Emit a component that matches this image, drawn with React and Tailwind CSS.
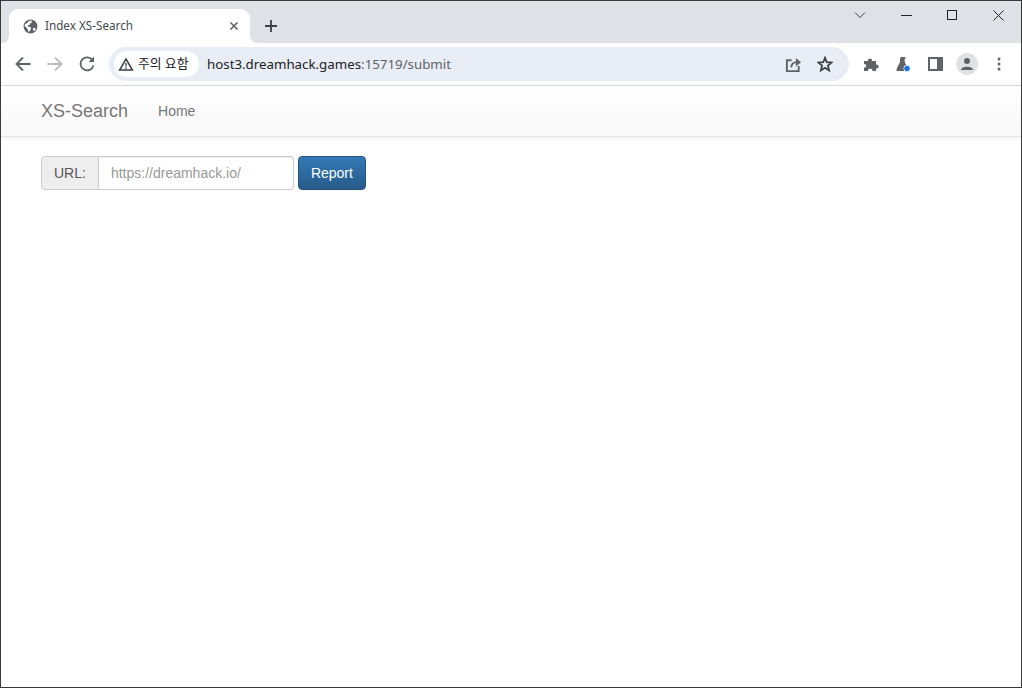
const ui = { fontFamily: '"Noto Sans", "Noto Sans CJK KR", sans-serif' };

function Globe() {
  return (
    <svg width="15" height="15" viewBox="0 0 16 16" className="shrink-0">
      <circle cx="8" cy="8" r="7.4" fill="#5f6368" />
      <path d="M2 5.5 L5 4 L6 2 L9 1.6 L9.5 3.5 L7.5 5 L7 6.5 L5 6.5 L5.5 8 L8 8.5 L8.5 10.5 L7 13 L6 14 L5 11 L3.5 9 L1.8 7.5Z" fill="#fff" />
      <path d="M11 9.5 L13 9.5 L13.5 11 L12 13 L10.5 11.5Z" fill="#fff" />
    </svg>
  );
}

function Tab() {
  return (
    <div className="relative flex items-center w-[241px] h-[34px] ml-[8px] bg-white rounded-t-[9px] pl-[14px] pr-[11px]">
      <svg className="absolute left-[-8px] bottom-0" width="8" height="8" viewBox="0 0 8 8"><path d="M8 0 V8 H0 Q8 8 8 0Z" fill="#fff" /></svg>
      <svg className="absolute right-[-8px] bottom-0" width="8" height="8" viewBox="0 0 8 8"><path d="M0 0 V8 H8 Q0 8 0 0Z" fill="#fff" /></svg>
      <Globe />
      <span className="ml-[7px] text-[11.7px] text-[#45484c] flex-1 whitespace-nowrap" style={ui}>Index XS-Search</span>
      <svg width="10" height="10" viewBox="0 0 10 10"><path d="M1.5 1.5 L8.5 8.5 M8.5 1.5 L1.5 8.5" stroke="#5f6368" strokeWidth="1.7" /></svg>
    </div>
  );
}

function Toolbar() {
  return (
    <div className="flex items-center h-[42px] bg-white">
      <div className="flex items-center w-[108px] shrink-0">
        <svg className="ml-[14px]" width="16" height="16" viewBox="0 0 16 16"><path d="M15.5 8 H2 M8 1.5 L1.5 8 L8 14.5" fill="none" stroke="#5f6368" strokeWidth="1.8" /></svg>
        <svg className="ml-[16px]" width="16" height="16" viewBox="0 0 16 16"><path d="M0.5 8 H14 M8 1.5 L14.5 8 L8 14.5" fill="none" stroke="#babcbe" strokeWidth="1.8" /></svg>
        <svg className="ml-[16px]" width="16" height="16" viewBox="0 0 16 16"><path d="M13.6 4.4 A6.5 6.5 0 1 0 14.4 9.5" fill="none" stroke="#5f6368" strokeWidth="1.8" /><path d="M9.5 6 H15 V0.5Z" fill="#5f6368" /></svg>
      </div>
      <div className="flex items-center w-[740px] h-[34px] rounded-[17px] bg-[#e9edf6] pl-[5px] pr-[16px] shrink-0">
        <div className="flex items-center h-[26px] w-[85px] bg-white rounded-[13px] pl-[4px]">
          <svg width="16" height="15" viewBox="0 0 16 15"><path d="M8 2 L14.4 13 H1.6Z" fill="none" stroke="#3c4043" strokeWidth="1.5" /><path d="M8 6 V9.5 M8 10.3 V12" stroke="#3c4043" strokeWidth="1.3" /></svg>
          <span className="ml-[4px] text-[12.8px] text-[#202124] whitespace-nowrap" style={ui}>주의 요함</span>
        </div>
        <span className="ml-[8px] mt-[1px] text-[13.3px] text-[#202124] flex-1 whitespace-nowrap" style={ui}>host3.dreamhack.games<span className="text-[#5f6368]">:15719/submit</span></span>
        <svg width="17" height="17" viewBox="0 0 18 18" className="mr-[15px]"><path d="M14.5 10.5 V16 H2 V4.5 H7" fill="none" stroke="#5f6368" strokeWidth="2" /><path d="M6.5 12 C7 8 9 6.5 12.5 6.5" fill="none" stroke="#5f6368" strokeWidth="2" /><path d="M11.5 2 L17 6.5 L11.5 11Z" fill="#5f6368" /></svg>
        <svg width="16" height="16" viewBox="0 0 18 18"><path d="M9 2 L11 7 L16.5 7.4 L12.3 10.9 L13.6 16.2 L9 13.3 L4.4 16.2 L5.7 10.9 L1.5 7.4 L7 7Z" fill="none" stroke="#3c4043" strokeWidth="2" /></svg>
      </div>
      <div className="flex items-center flex-1">
        <svg className="ml-[14px]" width="16" height="16" viewBox="0 0 16 16"><path d="M1 5 H5 C4.6 1.5 9.4 1.5 9 5 H13 V8.5 C16.5 8 16.5 13 13 12.5 V15 H9.5 C10 12 4.5 12 5 15 H1 V11.5 C4 12 4 7.5 1 8Z" fill="#5f6368" /></svg>
        <svg className="ml-[16px]" width="16" height="16" viewBox="0 0 16 16"><path d="M5.5 1 H10.5 V2.5 H9.7 V6 L13 13 Q13.5 15 12 15 H2.5 Q1 15 1.6 13 L5 6 V2.5 H5.5Z" fill="#5f6368" /><circle cx="12" cy="12.5" r="3.2" fill="#1a73e8" stroke="#fff" strokeWidth="0.8" /></svg>
        <svg className="ml-[17px]" width="15" height="14" viewBox="0 0 15 14"><path d="M0 0 H15 V14 H0Z M2 2 V12 H9 V2Z" fill="#5f6368" fillRule="evenodd" /></svg>
        <div className="ml-[13px] w-[22px] h-[22px] rounded-full bg-[#dfe1e5] flex items-center justify-center">
          <svg width="14" height="14" viewBox="0 0 14 14"><circle cx="7" cy="4" r="3" fill="#5f6368" /><path d="M1 13 C1 8.5 13 8.5 13 13Z" fill="#5f6368" /></svg>
        </div>
        <svg className="ml-[19px]" width="4" height="14" viewBox="0 0 4 14"><circle cx="2" cy="2" r="1.5" fill="#5f6368" /><circle cx="2" cy="7" r="1.5" fill="#5f6368" /><circle cx="2" cy="12" r="1.5" fill="#5f6368" /></svg>
      </div>
    </div>
  );
}

function TabStrip() {
  return (
    <div className="flex items-end h-[42px] bg-[#dee1e6]">
      <Tab />
      <svg className="ml-[14px] mb-[10px]" width="14" height="14" viewBox="0 0 14 14"><path d="M7 1 V13 M1 7 H13" stroke="#3c4043" strokeWidth="1.8" /></svg>
      <div className="ml-auto self-start flex items-center h-[28px] text-[#202124]">
        <svg width="12" height="8" viewBox="0 0 12 8" className="mr-[35px]"><path d="M1 1.5 L6 6.5 L11 1.5" fill="none" stroke="#3c4043" strokeWidth="1" /></svg>
        <svg width="11" height="1" viewBox="0 0 11 1" className="mr-[35px]"><rect width="11" height="1" fill="#202124" /></svg>
        <svg width="10" height="10" viewBox="0 0 10 10" className="mr-[36px]"><rect x="0.5" y="0.5" width="9" height="9" fill="none" stroke="#202124" /></svg>
        <svg width="11" height="11" viewBox="0 0 11 11" className="mr-[17px]"><path d="M0.5 0.5 L10.5 10.5 M10.5 0.5 L0.5 10.5" stroke="#202124" /></svg>
      </div>
    </div>
  );
}

function Page() {
  const font = { fontFamily: '"Liberation Sans", Arial, sans-serif' };
  return (
    <div className="flex-1 bg-white" style={font}>
      <nav className="flex items-center h-[51px] pl-[40px] border-b border-[#e7e7e7] bg-gradient-to-b from-white to-[#f8f8f8] shadow-[0_1px_5px_rgba(0,0,0,0.075)]">
        <span className="text-[18px] text-[#777777]">XS-Search</span>
        <span className="ml-[30px] text-[14px] text-[#777777]">Home</span>
      </nav>
      <div className="flex items-stretch mt-[19px] ml-[40px] h-[34px]">
        <div className="flex items-center px-[12px] bg-[#eeeeee] border border-[#cccccc] rounded-l-[4px] text-[14px] text-[#555555]">URL:</div>
        <input readOnly placeholder="https://dreamhack.io/" className="w-[195px] px-[12px] border border-l-0 border-[#cccccc] rounded-r-[4px] text-[14px] text-[#555555] bg-white outline-none placeholder:text-[#999999] shadow-[inset_0_1px_1px_rgba(0,0,0,0.075)]" />
        <button className="ml-[4px] w-[68px] rounded-[4px] border border-[#245580] bg-gradient-to-b from-[#337ab7] to-[#265a88] text-white text-[14px]">Report</button>
      </div>
    </div>
  );
}

export default function App() {
  return (
    <div className="w-[1022px] h-[688px] flex flex-col border border-[#3a3a3a] overflow-hidden bg-white">
      <TabStrip />
      <Toolbar />
      <div className="h-px bg-[#dadce0]" />
      <Page />
    </div>
  );
}
